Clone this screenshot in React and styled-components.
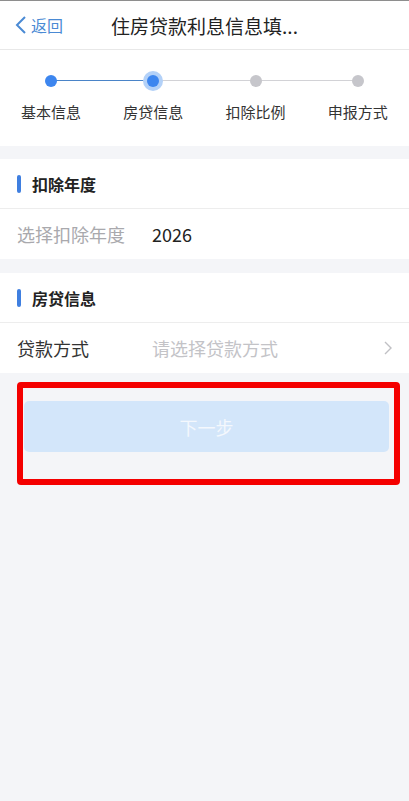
import React from "react";
import styled, { createGlobalStyle } from "styled-components";

const GlobalStyle = createGlobalStyle`
  html, body {
    margin: 0;
    padding: 0;
    background: #f4f5f8;
    font-family: "Noto Sans CJK SC", "Noto Sans", sans-serif;
  }
`;

const Page = styled.div`
  min-height: 801px;
  background: #f4f5f8;
  border-top: 1px solid #8e8e8e;
  box-sizing: border-box;
`;

const Header = styled.div`
  position: relative;
  height: 48px;
  background: #fff;
  border-bottom: 1px solid #e8e8e8;
  display: flex;
  align-items: center;
  justify-content: center;
`;

const Back = styled.div`
  position: absolute;
  left: 15px;
  top: 0;
  bottom: 0;
  display: flex;
  align-items: center;
  gap: 4px;
  color: #4a8ad4;
  font-size: 16px;
`;

const Title = styled.div`
  max-width: 200px;
  font-size: 19px;
  color: #222;
  white-space: nowrap;
`;

const Steps = styled.div`
  background: #fff;
  display: grid;
  grid-template-columns: repeat(4, 1fr);
  padding: 20px 0 23px;
`;

const Step = styled.div`
  display: flex;
  flex-direction: column;
  align-items: center;
  position: relative;
`;

const Track = styled.div`
  position: relative;
  width: 100%;
  height: 22px;
  display: flex;
  align-items: center;
  justify-content: center;
`;

const Line = styled.div`
  position: absolute;
  top: 10px;
  height: 1px;
  left: ${(p) => (p.$side === "left" ? "0" : "50%")};
  right: ${(p) => (p.$side === "left" ? "50%" : "0")};
  background: ${(p) => (p.$done ? "#4a84c8" : "#d2d2d6")};
`;

const Dot = styled.div`
  position: relative;
  width: 12px;
  height: 12px;
  border-radius: 50%;
  background: ${(p) => (p.$active ? "#3d86ef" : "#c6c6cb")};
  box-shadow: ${(p) => (p.$current ? "0 0 0 4px #b3d1f8" : "none")};
`;

const StepLabel = styled.div`
  margin-top: 9px;
  font-size: 15px;
  color: #333;
  line-height: 22px;
`;

const Section = styled.div`
  margin-top: 13px;
  background: #fff;

  & + & {
    margin-top: 14px;
  }
`;

const SectionHead = styled.div`
  height: 49px;
  display: flex;
  align-items: center;
  padding-left: 17px;
  border-bottom: 1px solid #ededed;
  font-size: 16px;
  font-weight: 700;
  color: #222;
`;

const Bar = styled.span`
  width: 4px;
  height: 18px;
  border-radius: 2px;
  background: #3f7fe0;
  margin-right: 11px;
`;

const Row = styled.div`
  height: 50px;
  display: flex;
  align-items: center;
  padding: 0 17px;
  font-size: 18px;
`;

const Label = styled.div`
  width: 135px;
  color: ${(p) => (p.$muted ? "#a9a9ad" : "#333")};
`;

const Value = styled.div`
  flex: 1;
  color: ${(p) => (p.$placeholder ? "#c3c3c7" : "#222")};
`;

const Highlight = styled.div`
  margin: 9px 9px 0 17px;
  border: 6px solid #f40000;
  border-radius: 4px;
  padding: 13px 5px 27px 1px;
`;

const NextButton = styled.div`
  height: 51px;
  border-radius: 5px;
  background: #d3e6fa;
  color: #f4f8fd;
  font-size: 18px;
  display: flex;
  align-items: center;
  justify-content: center;
`;

const steps = ["基本信息", "房贷信息", "扣除比例", "申报方式"];
const current = 1;

export default function App() {
  return (
    <>
      <GlobalStyle />
      <Page>
        <Header>
          <Back>
            <svg width="12" height="20" viewBox="0 0 12 20">
              <path d="M10 2 L2 10 L10 18" fill="none" stroke="#4a8ad4" strokeWidth="2" />
            </svg>
            返回
          </Back>
          <Title>住房贷款利息信息填...</Title>
        </Header>
        <Steps>
          {steps.map((s, i) => (
            <Step key={s}>
              <Track>
                {i > 0 && <Line $side="left" $done={i <= current} />}
                {i < steps.length - 1 && <Line $side="right" $done={i < current} />}
                <Dot $active={i <= current} $current={i === current} />
              </Track>
              <StepLabel>{s}</StepLabel>
            </Step>
          ))}
        </Steps>
        <Section>
          <SectionHead>
            <Bar />
            扣除年度
          </SectionHead>
          <Row>
            <Label $muted>选择扣除年度</Label>
            <Value>2026</Value>
          </Row>
        </Section>
        <Section>
          <SectionHead>
            <Bar />
            房贷信息
          </SectionHead>
          <Row>
            <Label>贷款方式</Label>
            <Value $placeholder>请选择贷款方式</Value>
            <svg width="8" height="14" viewBox="0 0 8 14">
              <path d="M1 1 L7 7 L1 13" fill="none" stroke="#c0c0c4" strokeWidth="1.4" />
            </svg>
          </Row>
        </Section>
        <Highlight>
          <NextButton>下一步</NextButton>
        </Highlight>
      </Page>
    </>
  );
}
